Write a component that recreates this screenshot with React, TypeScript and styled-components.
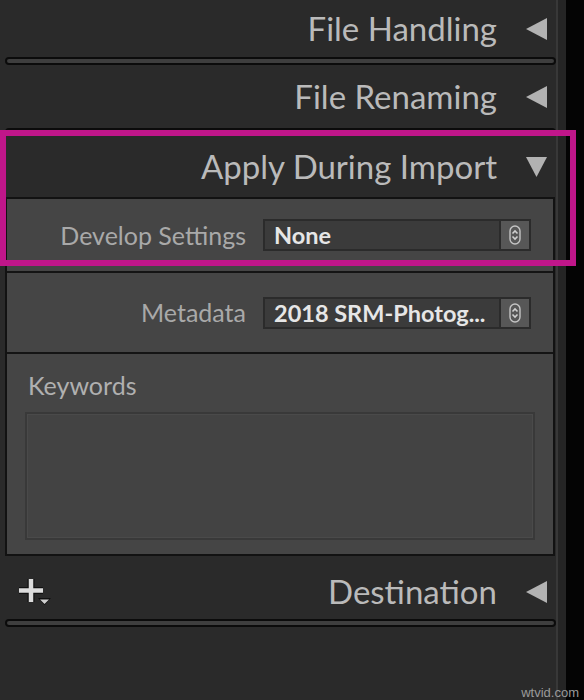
import React from "react";
import styled, { createGlobalStyle } from "styled-components";

const GlobalStyle = createGlobalStyle`
  html, body { margin: 0; padding: 0; background: #040404; }
  body { font-family: Lato, "Open Sans", sans-serif; }
`;

const Page = styled.div`
  position: relative;
  width: 584px;
  height: 700px;
  overflow: hidden;
  background: linear-gradient(
    to right,
    #2a2a2a 0,
    #2a2a2a 556px,
    #383838 556px,
    #383838 558px,
    #252525 558px,
    #252525 566px,
    #040404 566px
  );
  font-family: Lato, "Open Sans", sans-serif;
`;

const Column = styled.div`
  width: 557px;
  display: flex;
  flex-direction: column;
`;

const Header = styled.div<{ $h: number; $pt?: number }>`
  height: ${(p) => p.$h}px;
  box-sizing: border-box;
  padding: ${(p) => p.$pt ?? 0}px 10px 0 18px;
  display: flex;
  align-items: center;
  gap: 29px;
`;

const Title = styled.span`
  margin-left: auto;
  font-size: 33px;
  line-height: 1;
  color: #bababa;
  white-space: nowrap;
`;

const Divider = styled.div`
  height: 8px;
  margin: 0 1px 0 5px;
  box-sizing: border-box;
  border-radius: 4px;
  background: #3e3e3e;
  border: 2px solid #0b0b0b;
`;

const Panel = styled.div`
  margin-left: 5px;
  width: 550px;
  box-sizing: border-box;
  border: 2px solid #121212;
  background: #454545;
  display: flex;
  flex-direction: column;
`;

const FieldRow = styled.div<{ $h: number }>`
  height: ${(p) => p.$h}px;
  box-sizing: border-box;
  display: grid;
  grid-template-columns: 1fr 268px;
  column-gap: 17px;
  align-items: center;
  padding-right: 22px;
`;

const Label = styled.span`
  justify-self: end;
  font-size: 25px;
  line-height: 1;
  color: #a9a9a9;
  white-space: nowrap;
`;

const RowSep = styled.div`
  height: 2px;
  background: #141414;
`;

const Select = styled.div`
  height: 32px;
  box-sizing: border-box;
  display: flex;
  border: 2px solid #2b2b2b;
  background: #3b3b3b;
`;

const SelectValue = styled.span`
  flex: 1;
  padding-left: 9px;
  font-size: 23.5px;
  font-weight: 700;
  line-height: 28px;
  color: #e6e6e6;
  white-space: nowrap;
  overflow: hidden;
`;

const Stepper = styled.span`
  width: 28px;
  background: #575757;
  border-left: 2px solid #2b2b2b;
  display: flex;
  align-items: center;
  justify-content: center;
`;

const KeywordSection = styled.div`
  height: 200px;
  box-sizing: border-box;
  padding: 19px 18px 14px;
  display: flex;
  flex-direction: column;
  gap: 14px;
`;

const SectionLabel = styled.span`
  padding-left: 3px;
  font-size: 25px;
  line-height: 1;
  color: #b0b0b0;
`;

const KeywordBox = styled.div`
  height: 128px;
  box-sizing: border-box;
  background: #434343;
  border: 2px solid #393939;
  box-shadow: inset 0 0 0 1px #4a4a4a;
`;

const Highlight = styled.div`
  position: absolute;
  left: 0;
  top: 130px;
  width: 576px;
  height: 136px;
  box-sizing: border-box;
  border: 6px solid #c0168a;
  pointer-events: none;
`;

const Watermark = styled.span`
  position: absolute;
  right: 5px;
  bottom: 0;
  font-family: "Liberation Sans", Arial, sans-serif;
  font-size: 13px;
  line-height: 14px;
  color: #9a9a9a;
`;

const Arrow = ({ dir }: { dir: "left" | "down" }) => (
  <svg width="21" height="22" viewBox="0 0 21 22">
    {dir === "left" ? (
      <polygon points="0,11 21,0 21,22" fill="#b2b2b2" />
    ) : (
      <polygon points="0,1 21,1 10.5,21" fill="#b2b2b2" />
    )}
  </svg>
);

const StepIcon = () => (
  <svg width="12" height="20" viewBox="0 0 12 20">
    <rect x="1" y="1" width="10" height="18" rx="5" fill="none" stroke="#c4c4c4" strokeWidth="1.4" />
    <path d="M3.5 8.5 L6 6 L8.5 8.5" fill="none" stroke="#d0d0d0" strokeWidth="1.6" />
    <path d="M3.5 11.5 L6 14 L8.5 11.5" fill="none" stroke="#d0d0d0" strokeWidth="1.6" />
  </svg>
);

const PlusIcon = () => (
  <svg width="34" height="30" viewBox="0 0 34 30">
    <path d="M13 2 V25 M1 13.5 H25" stroke="#111" strokeWidth="7" />
    <path d="M13 2 V25 M1 13.5 H25" stroke="#dcdcdc" strokeWidth="4.5" />
    <polygon points="20,21 33,21 26.5,28" fill="#111" />
    <polygon points="22,22.5 31,22.5 26.5,27" fill="#cfcfcf" />
  </svg>
);

const Field = ({ label, value }: { label: string; value: string }) => (
  <>
    <Label>{label}</Label>
    <Select>
      <SelectValue>{value}</SelectValue>
      <Stepper>
        <StepIcon />
      </Stepper>
    </Select>
  </>
);

export default function App() {
  return (
    <Page>
      <GlobalStyle />
      <Column>
        <Header $h={57}>
          <Title>File Handling</Title>
          <Arrow dir="left" />
        </Header>
        <Divider />
        <Header $h={63}>
          <Title>File Renaming</Title>
          <Arrow dir="left" />
        </Header>
        <Divider />
        <Header $h={61}>
          <Title>Apply During Import</Title>
          <Arrow dir="down" />
        </Header>
        <Panel>
          <FieldRow $h={72}>
            <Field label="Develop Settings" value="None" />
          </FieldRow>
          <RowSep />
          <FieldRow $h={79}>
            <Field label="Metadata" value="2018 SRM-Photog..." />
          </FieldRow>
          <RowSep />
          <KeywordSection>
            <SectionLabel>Keywords</SectionLabel>
            <KeywordBox />
          </KeywordSection>
        </Panel>
        <Header $h={63} $pt={8}>
          <PlusIcon />
          <Title>Destination</Title>
          <Arrow dir="left" />
        </Header>
        <Divider />
      </Column>
      <Highlight />
      <Watermark>wtvid.com</Watermark>
    </Page>
  );
}
